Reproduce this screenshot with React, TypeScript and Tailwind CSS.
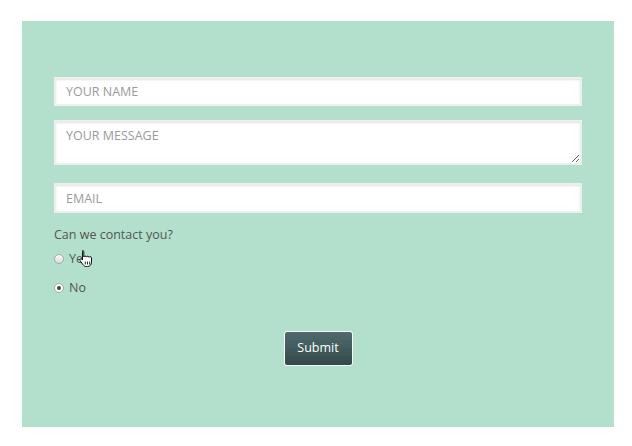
import { useState } from 'react';

const fieldClass =
  'w-full bg-white border-2 border-[#eeeeee] shadow-[inset_0_1px_2px_rgba(0,0,0,0.12)] px-[10px] text-[12.5px] text-[#555] placeholder-[#9a9a9a] outline-none';

function HandCursor() {
  return (
    <svg width="16" height="19" viewBox="0 0 16 19" className="absolute left-[24px] top-[-1px] pointer-events-none">
      <path
        d="M4.5 1.5c.8 0 1.3.6 1.3 1.3V8c.2-.6.7-1 1.3-1 .7 0 1.2.5 1.3 1.1.2-.5.7-.9 1.3-.9.7 0 1.2.5 1.3 1.1.2-.4.6-.7 1.2-.7.8 0 1.3.6 1.3 1.3v4.3c0 2.4-1.6 4.3-4 4.3H8.2c-1.3 0-2.3-.6-3-1.6L2.1 11.6c-.4-.6-.2-1.4.4-1.7.5-.3 1.2-.1 1.5.4l.5.8V2.8c0-.7.6-1.3 0-1.3z"
        fill="#fff"
        stroke="#111"
        strokeWidth="1"
        strokeLinejoin="round"
      />
      <path d="M7.3 12.5v3M9.5 12.5v3M11.7 12.5v3" stroke="#111" strokeWidth="0.9" />
    </svg>
  );
}

function Radio({ label, checked, onChange, children }: { label: string; checked: boolean; onChange: () => void; children?: React.ReactNode }) {
  return (
    <label className="relative flex items-center gap-[5px] h-[18px] cursor-pointer">
      <span
        className={`w-[10px] h-[10px] rounded-full border border-[#a8a8a8] flex items-center justify-center ${
          checked ? 'bg-white' : 'bg-[linear-gradient(#fafafa,#dcdcdc)]'
        }`}
      >
        {checked && <span className="w-[4px] h-[4px] rounded-full bg-[#444]" />}
      </span>
      <input type="radio" className="hidden" checked={checked} onChange={onChange} />
      <span className="text-[12.5px] text-[#555]">{label}</span>
      {children}
    </label>
  );
}

export default function App() {
  const [contact, setContact] = useState<'yes' | 'no'>('no');

  return (
    <div className="w-[632px] h-[446px] bg-white pt-[21px] pl-[22px]" style={{ fontFamily: '"Open Sans", "Liberation Sans", sans-serif' }}>
      <div className="w-[592px] h-[406px] bg-[#b2e0cc] pt-[56px] px-[32px]">
        <input type="text" placeholder="YOUR NAME" className={`${fieldClass} h-[29px] block`} />
        <textarea placeholder="YOUR MESSAGE" className={`${fieldClass} h-[45px] mt-[14px] pt-[5px] block resize-y`} />
        <input type="text" placeholder="EMAIL" className={`${fieldClass} h-[30px] mt-[18px] block`} />

        <p className="mt-[13px] text-[12.5px] text-[#555] leading-[18px]">Can we contact you?</p>
        <div className="mt-[6px] flex flex-col gap-[11px]">
          <Radio label="Yes" checked={contact === 'yes'} onChange={() => setContact('yes')}>
            <HandCursor />
          </Radio>
          <Radio label="No" checked={contact === 'no'} onChange={() => setContact('no')} />
        </div>

        <div className="flex justify-center mt-[34px]">
          <button className="w-[69px] h-[35px] rounded-[3px] border border-white bg-[linear-gradient(#4f6b6e,#33494b)] text-white text-[12.5px]">
            Submit
          </button>
        </div>
      </div>
    </div>
  );
}
